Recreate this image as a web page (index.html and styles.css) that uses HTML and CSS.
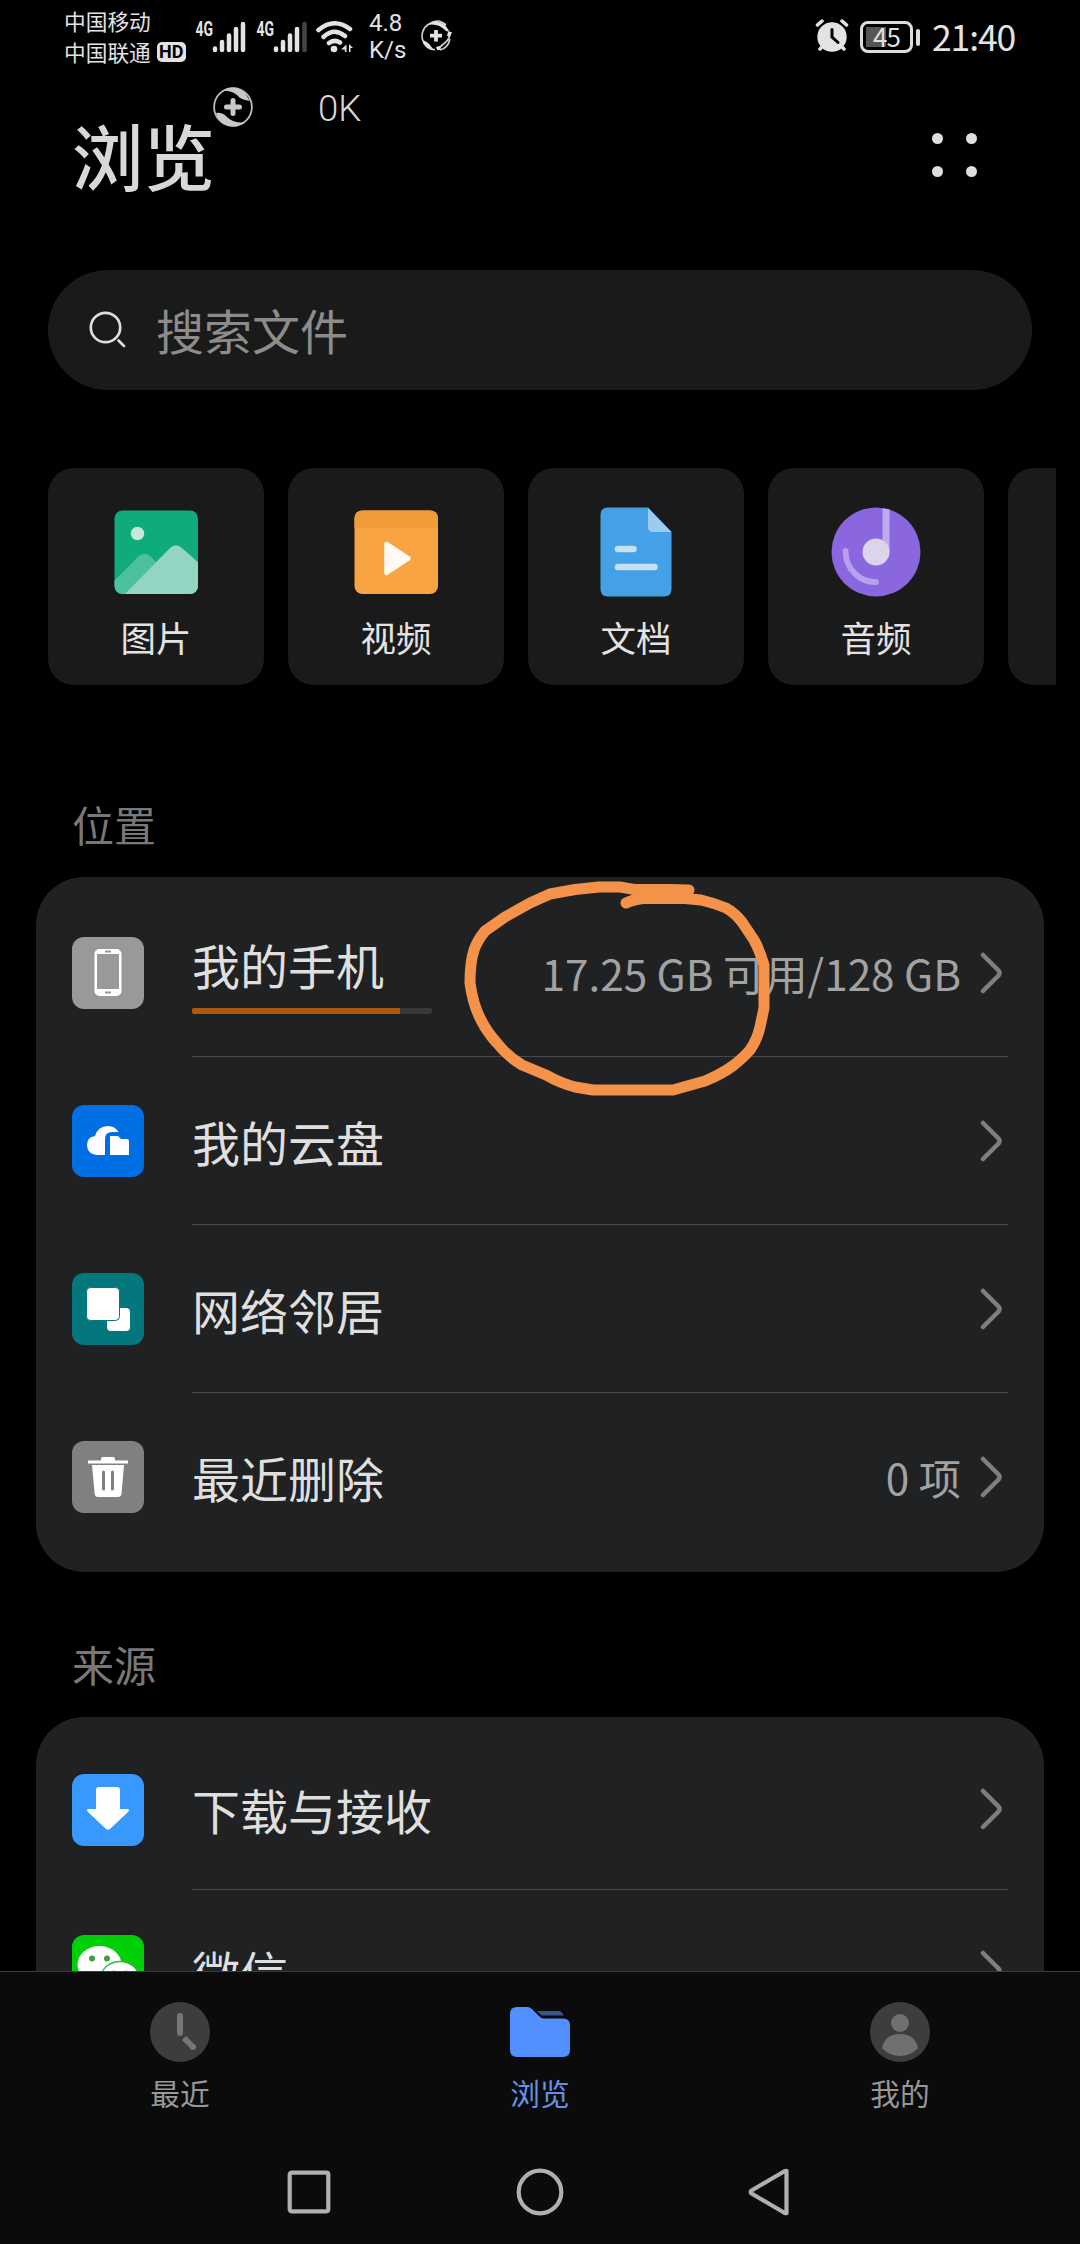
FILE: index.html
```html
<!DOCTYPE html>
<html lang="zh-CN">
<head>
<meta charset="utf-8">
<title>浏览</title>
<link rel="stylesheet" href="styles.css">
</head>
<body>
<div class="screen">
  <div class="status">
    <div class="carriers">
      <span>中国移动</span>
      <span class="carrier">中国联通<b class="hd">HD</b></span>
    </div>
    <svg class="signals" width="162" height="40" viewBox="193 16 162 40">
      <g class="net"><text x="195.500" y="34.500" textLength="17.500" lengthAdjust="spacingAndGlyphs">4G</text><text x="256.500" y="34.500" textLength="17.500" lengthAdjust="spacingAndGlyphs">4G</text></g>
      <g fill="none" stroke="#e3e3e3" stroke-width="4.500" stroke-linecap="round">
        <path d="M215 47.500V49M222 41V49M229 34.500V49M236 28V49M243 23V49"/>
        <path d="M276 47.500V49M283 41V49M290 34.500V49M297 28V49"/>
        <path d="M304.500 23V49" stroke="#444"/>
        <path d="M318.500 29Q334 16 350 28M323.500 36Q334 26 345 35M329 42Q334 38 340 41.500"/>
      </g>
      <circle cx="334" cy="48" r="3.300" fill="#e3e3e3"/>
      <path d="M346.500 43.500V51H344.800V48.500H341L346.500 43.500ZM349 43L353 47L350.500 47V51H349Z" fill="#e3e3e3"/>
    </svg>
    <div class="speed"><span>4.8</span><span>K/s</span></div>
    <svg class="guard" width="34" height="34" viewBox="0 0 34 34">
      <path d="M4 22A13.800 13.800 0 0 1 10 5Q19-1 27 6M30 13Q32 17 28 22L20 29M16 30.500Q12 31 8 28M21 31Q29 29 31 20" fill="none" stroke="#ccc" stroke-width="1.700"/>
      <path d="M9 6Q17-1 26 6L31 13L27 12Q19 4 9 6ZM3 21Q9 22 14 30Q5 30 3 21ZM29 13L33 13L31 18L28 17ZM17 28L21 27L22 31L18 31Z" fill="#e3e3e3"/>
      <path d="M17 11V22.500M11 16.700H23" stroke="#e3e3e3" stroke-width="3.800"/>
    </svg>
    <svg class="alarm" width="34" height="34" viewBox="0 0 34 34">
      <circle cx="17" cy="18" r="14.700" fill="#e3e3e3"/>
      <path d="M2.500 6L7 2M31.500 6L27 2M5 30L8 27M29 30L26 27" stroke="#e3e3e3" stroke-width="3.500" stroke-linecap="round"/>
      <path d="M17 10.500V18L23 23.500" fill="none" stroke="#000" stroke-width="3" stroke-linecap="round"/>
    </svg>
    <div class="battery"><span>45</span></div>
    <i class="nub"></i>
    <span class="time">21:40</span>
  </div>

  <div class="floater">
    <svg width="42" height="42" viewBox="0 0 42 42">
      <circle cx="21" cy="21" r="18.900" fill="none" stroke="#bbb" stroke-width="1.800"/>
      <path d="M10 5Q22-3 33 7L38 15L33 14Q28 13 25 9Q18 4 10 5ZM4 27Q10 26 15 31Q22 38 33 36Q24 43 14 39Q6 35 4 27Z" fill="#c8c8c8"/>
      <path d="M21 14.500V27.500M14.500 21H27.500" stroke="#c8c8c8" stroke-width="5" stroke-linecap="round"/>
    </svg>
    <span>0K</span>
  </div>

  <header class="head">
    <h1>浏览</h1>
    <div class="more"><i></i><i></i><i></i><i></i></div>
  </header>

  <div class="search">
    <svg width="40" height="40" viewBox="0 0 40 40" fill="none" stroke="#dedede" stroke-width="2.700" stroke-linecap="round"><circle cx="17.500" cy="17.500" r="14.700"/><path d="M30.500 30.500L36 36"/></svg>
    <span>搜索文件</span>
  </div>

  <div class="tiles">
    <div class="tile">
      <svg width="90" height="90" viewBox="0 0 90 90">
        <defs><clipPath id="photo"><rect x="3.500" y="3.500" width="83.500" height="83.500" rx="8"/></clipPath></defs>
        <g clip-path="url(#photo)"><rect width="90" height="90" fill="#0fab7d"/><path d="M0 77L28 49Q34 45 39 49L50 60V90H0Z" fill="#4dc19d"/><path d="M13 88L59 41Q65 35.500 71 41L90 58V90H11Z" fill="#94d4c2"/><circle cx="26.500" cy="26.500" r="6.800" fill="#c6e7da"/></g>
      </svg>
      <span>图片</span>
    </div>
    <div class="tile">
      <svg width="90" height="90" viewBox="0 0 90 90">
        <rect x="3.500" y="3.500" width="83.500" height="83.500" rx="8" fill="#f8a442"/><path d="M3.500 21V11.500Q3.500 3.500 11.500 3.500H79Q87 3.500 87 11.500V21Z" fill="#ef9c39"/>
        <path d="M35.500 37L57.500 51.300L35.500 66Z" fill="#fffaf3" stroke="#fffaf3" stroke-width="4.500" stroke-linejoin="round"/>
      </svg>
      <span>视频</span>
    </div>
    <div class="tile">
      <svg width="90" height="90" viewBox="0 0 90 90">
        <path d="M17 .5H57L80.500 25V82Q80.500 89.500 73 89.500H17Q9.500 89.500 9.500 82V8Q9.500 .5 17 .5Z" fill="#44a1e7"/><path d="M57 1L80.500 25H62Q57 25 57 20Z" fill="#9ccbed"/>
        <path d="M27 42H42.500M27 60H63.500" stroke="#c5dff3" stroke-width="6.500" stroke-linecap="round"/>
      </svg>
      <span>文档</span>
    </div>
    <div class="tile">
      <svg width="90" height="90" viewBox="0 0 90 90">
        <circle cx="45" cy="45" r="44.500" fill="#8a67df"/><path d="M51.500 1.500Q55 1.500 58.500 2.500V45H51.500Z" fill="#c2aaf0"/><circle cx="45" cy="45" r="13.500" fill="#dcd5ea"/><path d="M14.500 44A30 31 0 0 0 45 75" fill="none" stroke="#b99ff0" stroke-width="5.800" stroke-linecap="round"/>
      </svg>
      <span>音频</span>
    </div>
    <div class="tile"></div>
  </div>

  <h2 class="label">位置</h2>
  <section class="card places">
    <div class="row">
      <svg class="app" viewBox="0 0 72 72"><rect width="72" height="72" rx="12" fill="#999"/><rect x="22.500" y="12" width="27" height="47" rx="5" fill="#fff"/><path d="M25 17H47V52H25Z" fill="#999"/><path d="M33 14.500H39M33 55.500H39" stroke="#999" stroke-width="2"/></svg>
      <div class="line">
        <div class="disk"><span class="name">我的手机</span><div class="bar"><i style="width:86.700%"></i></div></div>
        <span class="value storage">17.25 GB 可用/128 GB</span>
        <svg class="chev" viewBox="0 0 24 44"><path d="M3 4L18.500 19.500Q20.500 22 18.500 24.500L3 40"/></svg>
      </div>
      <svg class="scribble" width="310" height="220" viewBox="460 880 310 220"><path d="M689 890L669 889.500L634 889.500Q626 888 620 887H599L575 889.500L550 894L530 903L505 917L485 931Q477 941 474 950Q470 962 470 983Q473 1005 481 1020Q487 1032 497 1043Q507 1056 522 1065L546 1075Q560 1083 575 1087L593 1090H673L705 1081Q722 1074 734 1065Q744 1057 750 1050Q757 1040 760 1027L764 1008V965Q760 951 754 940L742 922Q735 913 726 908Q714 903 701 900L685 898.500H643Q632 900 626 903"/></svg>
    </div>
    <div class="row">
      <svg class="app" viewBox="0 0 72 72"><rect width="72" height="72" rx="12" fill="#006fe3"/><path d="M33 50H25Q15 49 15 40Q15 32 23 31Q26 21 36 21Q43 21 46.500 27H40Q33 27 33 34Z" fill="#fff"/><path d="M38 31H46L49 34H55Q57 34 57 36V50H38Z" fill="#fff"/></svg>
      <div class="line"><span class="name">我的云盘</span><svg class="chev" viewBox="0 0 24 44"><path d="M3 4L18.500 19.500Q20.500 22 18.500 24.500L3 40"/></svg></div>
    </div>
    <div class="row">
      <svg class="app" viewBox="0 0 72 72"><rect width="72" height="72" rx="12" fill="#04777e"/><rect x="35" y="35" width="23" height="23" rx="4" fill="#fff"/><rect x="14.500" y="14.500" width="33" height="33" rx="4" fill="#fff" stroke="#04777e"/></svg>
      <div class="line"><span class="name">网络邻居</span><svg class="chev" viewBox="0 0 24 44"><path d="M3 4L18.500 19.500Q20.500 22 18.500 24.500L3 40"/></svg></div>
    </div>
    <div class="row">
      <svg class="app" viewBox="0 0 72 72"><rect width="72" height="72" rx="12" fill="#808080"/><path d="M16 19.500H29V18Q29 16 31 16H41Q43 16 43 18V19.500H56V22.500H16ZM20 24H52L49.500 53Q49 56 46 56H26Q23 56 22.700 53Z" fill="#fff"/><path d="M31.500 31V48M40.500 31V48" stroke="#808080" stroke-width="3" stroke-linecap="round"/></svg>
      <div class="line"><span class="name">最近删除</span><span class="value">0 项</span><svg class="chev" viewBox="0 0 24 44"><path d="M3 4L18.500 19.500Q20.500 22 18.500 24.500L3 40"/></svg></div>
    </div>
  </section>

  <h2 class="label">来源</h2>
  <div class="clip">
    <section class="card sources">
      <div class="row">
        <svg class="app" viewBox="0 0 72 72"><rect width="72" height="72" rx="12" fill="#3798fe"/><path d="M27 13H45Q48 13 48 16V35H55Q58.500 35 56 38L39 54Q36 57.500 33 54L16 38Q13.500 35 17 35H24V16Q24 13 27 13Z" fill="#fff"/></svg>
        <div class="line"><span class="name">下载与接收</span><svg class="chev" viewBox="0 0 24 44"><path d="M3 4L18.500 19.500Q20.500 22 18.500 24.500L3 40"/></svg></div>
      </div>
      <div class="row">
        <svg class="app" viewBox="0 0 72 72"><rect width="72" height="72" rx="12" fill="#00cf09"/><ellipse cx="27.500" cy="29.500" rx="22" ry="18.500" fill="#fff"/><circle cx="20" cy="23.500" r="3" fill="#3f9d48"/><circle cx="35" cy="23.500" r="3" fill="#3f9d48"/><ellipse cx="48" cy="43" rx="19" ry="16.500" fill="#fff" stroke="#3dae48" stroke-width="1.300"/><circle cx="42" cy="38" r="2.500" fill="#3f9d48"/><circle cx="54" cy="38" r="2.500" fill="#3f9d48"/></svg>
        <div class="line"><span class="name">微信</span><svg class="chev" viewBox="0 0 24 44"><path d="M3 4L18.500 19.500Q20.500 22 18.500 24.500L3 40"/></svg></div>
      </div>
    </section>
  </div>

  <footer class="bottom">
    <nav class="tabs">
      <div class="tab"><svg width="60" height="60" viewBox="0 0 60 60"><circle cx="30" cy="30" r="30" fill="#3d3d3d"/><path d="M30 14V31" stroke="#767676" stroke-width="6" stroke-linecap="round"/><path d="M34 36L43 45" stroke="#767676" stroke-width="6"/><circle cx="43" cy="45" r="3" fill="#767676"/></svg><span>最近</span></div>
      <div class="tab active"><svg width="60" height="60" viewBox="0 0 60 60"><path d="M7 5H17Q20 5 22 7L29 14Q31 16.500 34 16.500H53Q60 16.500 60 23V48Q60 55 53 55H7Q0 55 0 48V12Q0 5 7 5Z" fill="#528fff"/><path d="M27 9H49Q52 9 53.500 13.500H33Q31 13.500 30 12Z" fill="#3a5688"/></svg><span>浏览</span></div>
      <div class="tab"><svg width="60" height="60" viewBox="0 0 60 60"><circle cx="30" cy="30" r="30" fill="#3d3d3d"/><circle cx="30" cy="21" r="9" fill="#707070"/><path d="M12 46Q15 32 30 32Q45 32 48 46Q41 54 30 54Q19 54 12 46Z" fill="#707070"/></svg><span>我的</span></div>
    </nav>
    <div class="keys">
      <svg width="48" height="48" viewBox="0 0 48 48"><rect x="4.700" y="4.700" width="38.600" height="38.600" rx="2"/></svg>
      <svg width="48" height="48" viewBox="0 0 48 48"><circle cx="24" cy="24" r="21.300"/></svg>
      <svg width="48" height="48" viewBox="0 0 48 48"><path d="M39.500 2.800V45.200Q39 45.500 37 44.500L4.500 25.500Q3 24 4.500 22.500L37 3.500Q39 2.500 39.500 2.800Z"/></svg>
    </div>
  </footer>
</div>
</body>
</html>
```
FILE: styles.css
```css
* { box-sizing: border-box; margin: 0; padding: 0; }
body { background: #000; font-family: "Noto Sans CJK SC", sans-serif; color: #dfdfdf; }
svg { display: block; flex: none; }
span { white-space: nowrap; }
.screen { position: relative; width: 1080px; height: 2244px; overflow: hidden; display: flex; flex-direction: column; background: #000; }

.status { height: 74px; flex: none; display: flex; align-items: center; padding-left: 64px; }
.carriers { width: 129px; display: flex; flex-direction: column; font-size: 21.700px; line-height: 31px; color: #e3e3e3; margin-top: -3px; }
.carrier { display: flex; align-items: center; }
.hd { margin: 2px 0 0 6px; width: 29px; height: 20px; border-radius: 5px; background: #e3e3e3; color: #000; font: 700 18px/20px Roboto, sans-serif; text-align: center; }
.net { font: 700 20px "Roboto", sans-serif; fill: #e3e3e3; }
.speed { margin-left: 14px; width: 49px; display: flex; flex-direction: column; font: 24px/27px "Roboto", sans-serif; color: #e3e3e3; }
.guard { margin: -2px 0 0 1px; }
.alarm { margin: -2px 0 0 auto; }
.battery { margin: -1px 0 0 11px; width: 53px; height: 32px; border: 3px solid #dcdcdc; border-radius: 8px; display: flex; align-items: center; justify-content: center; background: linear-gradient(#555, #555) 3px 3px / 20px 20px no-repeat; font: 400 26px/26px "Noto Sans CJK SC", sans-serif; letter-spacing: -1px; }
.battery span { margin-top: -2px; }
.nub { margin-left: 3px; width: 4px; height: 17px; border-radius: 2px; background: #dcdcdc; }
.time { margin: -2px 64px 0 12px; width: 84px; font-size: 35.500px; line-height: 40px; letter-spacing: -1.100px; color: #e3e3e3; }

/* network monitor window, floats over the app */
.floater { position: absolute; left: 212px; top: 84px; display: flex; align-items: center; gap: 64px; font: 300 36.500px/42px "Roboto", sans-serif; color: #d8d8d8; }
.floater span { padding-top: 4px; }

.head { height: 196px; flex: none; display: flex; justify-content: space-between; align-items: flex-start; padding: 30px 103px 0 72px; }
.head h1 { font-size: 71.500px; font-weight: 500; line-height: 100px; color: #d8d8d8; }
.more { margin-top: 29px; display: grid; grid-template-columns: 11px 11px; gap: 22px 23px; }
.more i { width: 11px; height: 11px; border-radius: 50%; background: #dedede; }

.search { height: 120px; flex: none; margin: 0 48px; border-radius: 60px; background: #1a1a1a; display: flex; align-items: center; padding: 0 40px; gap: 28px; font-size: 48px; color: #8c8c8c; }
.search svg { margin-top: -1px; }
.search span { line-height: 60px; margin-top: -2px; }

.tiles { height: 217px; flex: none; margin: 78px 24px 0 48px; display: flex; gap: 24px; overflow: hidden; }
.tile { width: 216px; flex: none; border-radius: 26px; background: #1a1a1a; display: flex; flex-direction: column; align-items: center; padding-top: 39px; font-size: 35.500px; line-height: 50px; color: #e3e3e3; }
.tile span { margin-top: 15px; }

.label { height: 60px; flex: none; margin: 109px 72px 23px; font-size: 42px; font-weight: 400; line-height: 60px; color: #787878; }
.card { margin: 0 36px; border-radius: 48px; background: #202122; padding: 12px 36px; }
.places { height: 695px; flex: none; }
.places + .label { margin-top: 62px; }
.row { position: relative; height: 168px; display: flex; align-items: center; }
.app { width: 72px; height: 72px; }
.line { margin-left: 48px; flex: 1; height: 100%; display: flex; align-items: center; border-bottom: 1px solid #484848; }
.row:last-child .line { border-bottom: 0; }
.name { flex: 1; font-size: 48px; line-height: 64px; }
.disk { flex: 1; display: flex; flex-direction: column; }
.bar { margin-top: 12px; width: 240px; height: 6px; border-radius: 2px; overflow: hidden; background: #383838; }
.bar i { display: block; height: 100%; background: #ae580d; }
.value { font-size: 42.300px; line-height: 60px; color: #a2a2a2; margin-right: 19px; }
.chev { width: 24px; height: 44px; margin-right: 4px; fill: none; stroke: #7e7e7e; stroke-width: 4.500; stroke-linecap: round; }
/* hand-drawn mark over the free-space figure */
.scribble { position: absolute; left: 388px; top: -9px; fill: none; stroke: #f49249; stroke-width: 11; stroke-linecap: round; stroke-linejoin: round; }

.clip { height: 254px; flex: none; overflow: hidden; }
.sources .row { height: 161px; }

.bottom { flex: 1; border-top: 1px solid #3b3b3b; background: #0b0b0b; }
.tabs { height: 150px; display: grid; grid-template-columns: repeat(3, 1fr); }
.tab { display: flex; flex-direction: column; align-items: center; padding-top: 30px; font-size: 29.700px; line-height: 44px; color: #979797; }
.tab span { margin-top: 9px; }
.tab.active { color: #6292e8; }
.keys { display: flex; justify-content: center; gap: 183px; padding-top: 46px; }
.keys svg { fill: none; stroke: #b0b0b0; stroke-width: 4.200; stroke-linejoin: round; }
```
